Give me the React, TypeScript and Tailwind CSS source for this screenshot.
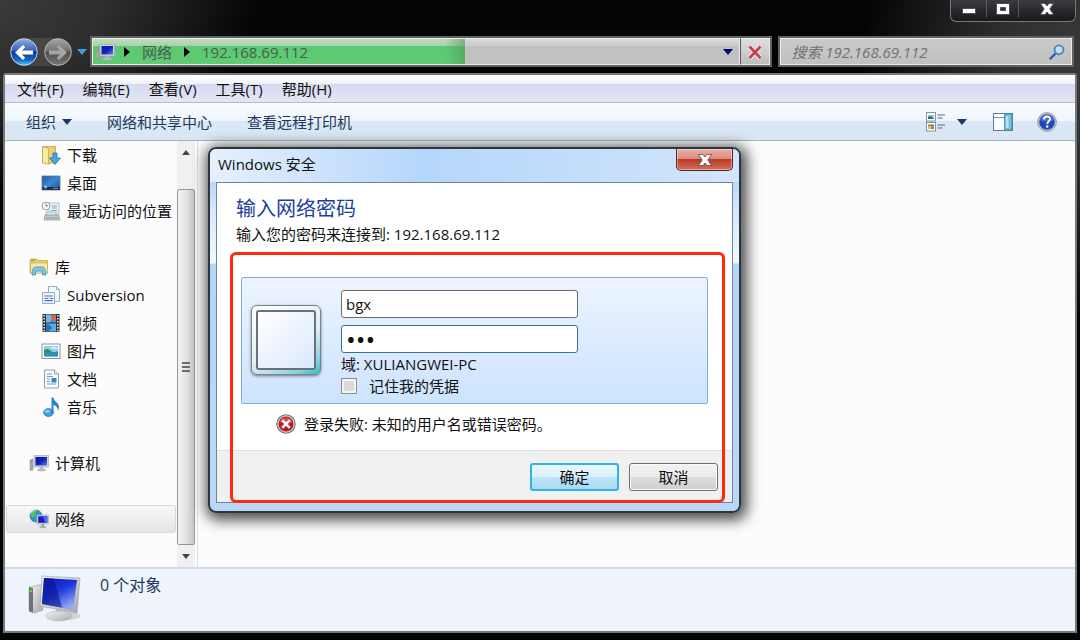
import { useState } from 'react';
import type { ReactNode } from 'react';

type NavItem = {
  label: string;
  icon: ReactNode;
  level?: number;
  active?: boolean;
};

function Caret({ className, fill = '#1e3a5f' }: { className?: string; fill?: string }) {
  return (
    <svg viewBox="0 0 10 6" className={className ?? 'h-[6px] w-[10px]'} aria-hidden="true">
      <path d="M0 0h10L5 6z" fill={fill} />
    </svg>
  );
}

function Crumb() {
  return (
    <svg viewBox="0 0 6 10" className="h-[10px] w-[6px] shrink-0" aria-hidden="true">
      <path d="M0 0l6 5-6 5z" fill="#000" />
    </svg>
  );
}

function BackIcon() {
  return (
    <svg viewBox="0 0 28 28" className="size-7" aria-hidden="true">
      <defs>
        <linearGradient id="back" x1="0" y1="0" x2="0" y2="1">
          <stop offset="0" stopColor="#8fb0e4" />
          <stop offset="0.45" stopColor="#2f62b8" />
          <stop offset="0.5" stopColor="#0c3a96" />
          <stop offset="0.8" stopColor="#1668c8" />
          <stop offset="1" stopColor="#4fd0ff" />
        </linearGradient>
      </defs>
      <circle cx="14" cy="14" r="13.3" fill="url(#back)" stroke="#c3cfe2" strokeWidth="1" />
      <path d="M5 14.500l8-7.500 2.200 2.200-3.300 3.300H23v4H11.900l3.300 3.300L13 22z" fill="#fff" />
    </svg>
  );
}

function ForwardIcon() {
  return (
    <svg viewBox="0 0 28 28" className="size-7" aria-hidden="true">
      <defs>
        <linearGradient id="forward" x1="0" y1="0" x2="0" y2="1">
          <stop offset="0" stopColor="#a4a4a4" />
          <stop offset="0.45" stopColor="#747474" />
          <stop offset="0.5" stopColor="#4e4e4e" />
          <stop offset="1" stopColor="#777" />
        </linearGradient>
      </defs>
      <circle cx="14" cy="14" r="13.3" fill="url(#forward)" stroke="#b4b4b4" strokeWidth="1" />
      <path d="M23 14.500L15 7l-2.200 2.200 3.300 3.300H5v4h11.100l-3.300 3.300L15 22z" fill="#a6a6a6" />
    </svg>
  );
}

function ComputerIcon() {
  return (
    <svg viewBox="0 0 20 20" className="size-5 shrink-0" aria-hidden="true">
      <defs>
        <linearGradient id="screen" x1="0" y1="0" x2="1" y2="1">
          <stop offset="0" stopColor="#0a14c8" />
          <stop offset="0.5" stopColor="#1420b4" />
          <stop offset="1" stopColor="#5c7cf0" />
        </linearGradient>
      </defs>
      <path d="M1 7l3-1v11l-3 .5z" fill="#a8a8a8" stroke="#888" strokeWidth="0.5" />
      <rect x="1.500" y="8" width="1.500" height="2" fill="#4fce3c" />
      <path d="M5 2.500h14.500v11.500H5z" fill="#d4d4d6" stroke="#a3a3a8" strokeWidth="0.6" />
      <path d="M6.500 4h11.500v8.500H6.500z" fill="url(#screen)" />
      <path d="M10.500 14h4v2.200h-4z" fill="#b5b5b5" />
      <ellipse cx="12.500" cy="17" rx="4.500" ry="1.300" fill="#b9b9bb" />
    </svg>
  );
}

function DownloadsIcon() {
  return (
    <svg viewBox="0 0 20 20" className="size-5" aria-hidden="true">
      <path d="M1.500 1.500h13v16l-7 1-6-1z" fill="#edcf74" stroke="#c29d45" strokeWidth="0.8" />
      <path d="M1.500 1.500l6 2v16l-6-2z" fill="#f9e9aa" stroke="#c29d45" strokeWidth="0.7" />
      <path d="M12 8h4v5h3.500L14 19.500 8.500 13H12z" fill="#48a6e6" stroke="#2272ae" strokeWidth="0.8" />
    </svg>
  );
}

function DesktopIcon() {
  return (
    <svg viewBox="0 0 20 20" className="size-5" aria-hidden="true">
      <defs>
        <linearGradient id="desk" x1="0" y1="0" x2="1" y2="1">
          <stop offset="0" stopColor="#1c5fae" />
          <stop offset="0.5" stopColor="#3d86d6" />
          <stop offset="1" stopColor="#1b4e98" />
        </linearGradient>
      </defs>
      <rect x="1" y="3" width="18" height="14" fill="url(#desk)" stroke="#64748b" strokeWidth="0.8" />
      <rect x="1.400" y="14" width="17.200" height="2.700" fill="#1a2940" />
      <circle cx="4.500" cy="14" r="1.800" fill="#4fb2e8" />
      <path d="M3.500 13h2v1h-2z" fill="#efc448" />
      <path d="M12 15.300h5" stroke="#9fb6d4" strokeWidth="0.8" />
    </svg>
  );
}

function RecentIcon() {
  return (
    <svg viewBox="0 0 20 20" className="size-5" aria-hidden="true">
      <path d="M7 2h11v11H7z" fill="#eef3f7" stroke="#a1adb8" strokeWidth="0.8" />
      <path d="M11 5h5M11 7h5M10 9.500h6" stroke="#6faed6" strokeWidth="1" />
      <path d="M5 11h10v4H5z" fill="#d5ecf5" stroke="#84a9bb" strokeWidth="0.7" />
      <path d="M4 14l-1 5h16l-1.500-5z" fill="#c6c8ca" stroke="#8d9093" strokeWidth="0.7" />
      <path d="M5 17h12" stroke="#86898c" strokeWidth="0.8" />
      <circle cx="5" cy="5" r="4" fill="#f3f5f7" stroke="#99a2aa" strokeWidth="1" />
      <path d="M5 2.500V5h2" stroke="#5d6a75" strokeWidth="0.8" fill="none" />
    </svg>
  );
}

function LibraryIcon() {
  return (
    <svg viewBox="0 0 20 20" className="size-5" aria-hidden="true">
      <path d="M1 3.500l1-1.500h6l1 1.500h9.500V16H1z" fill="#e9cd6c" stroke="#bf9d44" strokeWidth="0.7" />
      <path d="M2 2.500h4v1.500H2z" fill="#6ebf43" />
      <path d="M1.500 6h17v10h-17z" fill="#f8e8a6" stroke="#cbaa53" strokeWidth="0.6" />
      <path d="M3 18c0-5 1-8 4-8h6c3 0 4 3 4 8h-3.500v-4h-7v4z" fill="#7cc6ec" stroke="#4390bd" strokeWidth="0.8" />
    </svg>
  );
}

function SubversionIcon() {
  return (
    <svg viewBox="0 0 20 20" className="size-5" aria-hidden="true">
      <path d="M7.500 1.500h8l3 3v12h-11z" fill="#f4f9fd" stroke="#8ba6c1" strokeWidth="0.9" />
      <path d="M15.500 1.500v3h3" fill="#d6e5f2" stroke="#8ba6c1" strokeWidth="0.8" />
      <path d="M1.500 7.500h12v11h-12z" fill="#e9f3fb" stroke="#8ba6c1" strokeWidth="0.9" />
      <path d="M3.500 11h8M3.500 13.500h4M9 13.500h3M3.500 15.700h8" stroke="#5379b5" strokeWidth="1.2" />
    </svg>
  );
}

function VideoIcon() {
  return (
    <svg viewBox="0 0 20 20" className="size-5" aria-hidden="true">
      <rect x="1.500" y="1" width="17" height="18" fill="#2b3134" />
      <rect x="5" y="1.500" width="10" height="8" fill="#3f92d6" />
      <rect x="5" y="10.500" width="10" height="8" fill="#56aee9" />
      <path d="M5 1.500h4l2 3-2 5H5z" fill="#bfd9ea" opacity="0.5" />
      <path d="M10 3l5-1v7l-4-2z" fill="#d46a45" />
      <path d="M5 11l4 1 2 3-3 3H5z" fill="#2d6eb4" />
      <path d="M3.200 2v17M16.800 2v17" stroke="#dfe4e6" strokeWidth="1.6" strokeDasharray="1.5 1.5" />
    </svg>
  );
}

function PictureIcon() {
  return (
    <svg viewBox="0 0 20 20" className="size-5" aria-hidden="true">
      <rect x="1" y="3" width="18" height="14.500" fill="#fff" stroke="#8b9299" strokeWidth="1" />
      <rect x="3" y="5" width="14" height="10.500" fill="#8fd0ee" />
      <path d="M3 9c3-2 5-1 7 1s5 1 7 0v3H3z" fill="#3a8b63" />
      <path d="M3 12c5-1 9 0 14-1v4.500H3z" fill="#2f8fbf" />
      <path d="M9 7c3-1 5-1 7 0v1z" fill="#fff" />
    </svg>
  );
}

function DocumentIcon() {
  return (
    <svg viewBox="0 0 20 20" className="size-5" aria-hidden="true">
      <path d="M3.500 1h10l4 4v14h-14z" fill="#fafcfe" stroke="#8c949b" strokeWidth="0.9" />
      <path d="M13.500 1v4h4" fill="#dfe6ec" stroke="#8c949b" strokeWidth="0.8" />
      <path d="M6 5h5M6 7.500h6M6 10h3M6 12.500h3M6 15h9" stroke="#6d97c0" strokeWidth="1" />
      <rect x="10.500" y="9" width="5" height="4.500" fill="#3484c4" />
    </svg>
  );
}

function MusicIcon() {
  return (
    <svg viewBox="0 0 20 20" className="size-5" aria-hidden="true">
      <ellipse cx="7.500" cy="15.500" rx="5" ry="4" fill="#3b9fe0" stroke="#1f6fa8" strokeWidth="0.6" />
      <path d="M10.500 0.500h2c0 4 5.500 5 5.500 9.500 0 1.500-.6 3-1.300 3.800.4-3.300-1.700-5-4.200-5.800v8h-2z" fill="#2a86c9" />
      <ellipse cx="6.500" cy="14.500" rx="2.400" ry="1.400" fill="#90d2f6" />
    </svg>
  );
}

function NetworkIcon() {
  return (
    <svg viewBox="0 0 20 20" className="size-5" aria-hidden="true">
      <circle cx="7" cy="7" r="6" fill="#2b93d6" stroke="#2b6a98" strokeWidth="0.6" />
      <path d="M3 3c2-2 4-2 5-1.500L6 4l1 2-3 2.500-2.500-2zM7 8l3 1-1 3.500-2-.5z" fill="#5fc356" />
      <path d="M2 4c1-2 3-3 5-3" stroke="#d6f0ff" strokeWidth="0.8" fill="none" />
      <rect x="8" y="6" width="11.500" height="9" fill="#d2d3d6" stroke="#9d9ea3" strokeWidth="0.5" />
      <rect x="9.200" y="7.200" width="9.100" height="6.600" fill="#1522be" />
      <path d="M14 7.200h4.300v6.600H16z" fill="#4d6ae4" />
      <path d="M12.500 15h2.500v2h-2.500z" fill="#999" />
      <ellipse cx="13.700" cy="18" rx="3.500" ry="1.200" fill="#b0b1b4" />
    </svg>
  );
}

function BigComputerIcon() {
  return (
    <svg viewBox="0 0 54 50" className="h-[50px] w-[54px]" aria-hidden="true">
      <defs>
        <linearGradient id="bigScreen" x1="0" y1="0" x2="0.6" y2="1">
          <stop offset="0" stopColor="#0a18c0" />
          <stop offset="0.5" stopColor="#1a35d8" />
          <stop offset="1" stopColor="#8fa8f6" />
        </linearGradient>
        <linearGradient id="metal" x1="0" y1="0" x2="1" y2="1">
          <stop offset="0" stopColor="#f5f5f5" />
          <stop offset="1" stopColor="#a6a8ab" />
        </linearGradient>
      </defs>
      <ellipse cx="38" cy="42" rx="15" ry="4" fill="#000" opacity="0.12" />
      <path d="M1 13l14-3v26L7 39l-6-2z" fill="url(#metal)" stroke="#a5a5a8" strokeWidth="0.6" />
      <path d="M1 13l4 1v25l-4-2z" fill="#6f7275" />
      <circle cx="3" cy="17" r="1.4" fill="#5be03d" />
      <path d="M14 2l38 2-3 35-37-7z" fill="url(#metal)" stroke="#9d9fa2" strokeWidth="0.6" />
      <path d="M16 4l33 2-4 30-31-6z" fill="url(#bigScreen)" />
      <path d="M16 4l10 .6 8 29L14 30z" fill="#0a1590" opacity="0.6" />
      <path d="M28 35l9 2-1 6h-8z" fill="#b5b7b9" />
      <ellipse cx="31" cy="42" rx="13" ry="5" fill="url(#metal)" stroke="#b4b4b6" strokeWidth="0.6" />
    </svg>
  );
}

function ViewIcon() {
  return (
    <svg viewBox="0 0 20 20" className="size-5" aria-hidden="true">
      <rect x="0.500" y="0.500" width="9" height="8.500" fill="#fff" stroke="#7a8794" strokeWidth="0.9" />
      <path d="M2 3h6v4H2z" fill="#8ecbe8" />
      <path d="M2 5l3-1 3 3H2z" fill="#2d7a5a" />
      <rect x="0.500" y="10.500" width="9" height="8.500" fill="#fff" stroke="#7a8794" strokeWidth="0.9" />
      <path d="M2 12.500h3v2H2z" fill="#e0652f" />
      <path d="M5 12.500h3v2H5z" fill="#3b7fd0" />
      <path d="M2 14.500h3v2.500H2z" fill="#efc02f" />
      <path d="M5 14.500h3v2.500H5z" fill="#58a83c" />
      <path d="M11.500 3h7.500M11.500 6h5M11.500 13h7.500M11.500 16h5" stroke="#5b6a7c" strokeWidth="1.2" />
    </svg>
  );
}

function PreviewIcon() {
  return (
    <svg viewBox="0 0 20 18" className="h-[18px] w-5" aria-hidden="true">
      <rect x="0.500" y="0.500" width="19" height="17" fill="#fdfeff" stroke="#5f7d95" />
      <path d="M1 4.500h10.500" stroke="#7b93a8" />
      <rect x="11.500" y="1" width="7.500" height="16" fill="#6fc0dc" stroke="#4a7f9b" strokeWidth="0.8" />
      <path d="M13 3h2.500v12H13z" fill="#b5e6f5" />
    </svg>
  );
}

function HelpIcon() {
  return (
    <svg viewBox="0 0 20 20" className="size-5" aria-hidden="true">
      <circle cx="10" cy="10" r="9.3" fill="#c9ced6" stroke="#8d939d" strokeWidth="1" />
      <circle cx="10" cy="10" r="7.8" fill="#2149b4" />
      <path d="M3 8a7.500 7.500 0 0 1 14 0c-4 2-10 2-14 0z" fill="#6587d8" opacity="0.6" />
      <path d="M7 7.500c0-4 6-4 6-.5 0 2.200-2.800 2.400-2.800 5" fill="none" stroke="#fff" strokeWidth="1.9" />
      <circle cx="10.200" cy="14.500" r="1.2" fill="#fff" />
    </svg>
  );
}

function ErrorIcon() {
  return (
    <svg viewBox="0 0 20 20" className="size-5 shrink-0" aria-hidden="true">
      <circle cx="10" cy="10" r="9.2" fill="#d0d0d2" stroke="#77797c" strokeWidth="1.1" />
      <circle cx="10" cy="10" r="7.5" fill="#c01820" />
      <path d="M3.500 8a7 7 0 0 1 13 0c-4 2-9 2-13 0z" fill="#e2686c" opacity="0.6" />
      <path d="M6.200 6.200l7.600 7.600M13.800 6.200l-7.600 7.600" stroke="#fff" strokeWidth="2.6" />
    </svg>
  );
}

function SearchIcon() {
  return (
    <svg viewBox="0 0 16 16" className="size-4 shrink-0" aria-hidden="true">
      <path d="M6.500 9.500L1.500 14.500" stroke="#2d5aa8" strokeWidth="2.4" strokeLinecap="round" />
      <circle cx="10" cy="5.800" r="4.4" fill="#c9dcea" stroke="#3c8dd0" strokeWidth="1.9" />
    </svg>
  );
}

function StopIcon() {
  return (
    <svg viewBox="0 0 16 16" className="size-4" aria-hidden="true">
      <path d="M2.500 2.500l11 11.500M13.500 2.500l-11 11.500" stroke="#f4eeee" strokeWidth="5" />
      <path d="M2.500 2.500l11 11.500M13.500 2.500l-11 11.500" stroke="#c4434c" strokeWidth="3" />
    </svg>
  );
}

function CloseGlyph() {
  return (
    <svg viewBox="0 0 14 12" className="h-3 w-[14px]" aria-hidden="true">
      <path d="M0.500 0.500h4.500l2 2.500 2-2.500h4.500L9.800 6l3.700 5.500H9L7 9l-2 2.500H0.500L4.200 6z" fill="#fff" stroke="#4b4f58" strokeWidth="0.8" />
    </svg>
  );
}

const navItems: (NavItem | null)[] = [
  { label: '下载', icon: <DownloadsIcon />, level: 1 },
  { label: '桌面', icon: <DesktopIcon />, level: 1 },
  { label: '最近访问的位置', icon: <RecentIcon />, level: 1 },
  null,
  { label: '库', icon: <LibraryIcon /> },
  { label: 'Subversion', icon: <SubversionIcon />, level: 1 },
  { label: '视频', icon: <VideoIcon />, level: 1 },
  { label: '图片', icon: <PictureIcon />, level: 1 },
  { label: '文档', icon: <DocumentIcon />, level: 1 },
  { label: '音乐', icon: <MusicIcon />, level: 1 },
  null,
  { label: '计算机', icon: <ComputerIcon /> },
  null,
  { label: '网络', icon: <NetworkIcon />, active: true },
];

const menus = ['文件(F)', '编辑(E)', '查看(V)', '工具(T)', '帮助(H)'];

function WindowControls() {
  return (
    <div className="flex h-9 items-start justify-end pr-1">
      <div className="flex h-[22px] divide-x divide-[#5a5b5e] rounded-b-md border border-t-0 border-[#77787b] bg-gradient-to-b from-[#3b3c3f] to-[#18191b] pb-1">
        <button aria-label="最小化" className="flex w-9 items-center justify-center">
          <svg viewBox="0 0 14 6" className="mt-1 h-[6px] w-[14px]" aria-hidden="true">
            <rect x="0.500" y="0.500" width="13" height="5" fill="#fff" stroke="#4b4f58" />
          </svg>
        </button>
        <button aria-label="最大化" className="flex w-8 items-center justify-center">
          <svg viewBox="0 0 14 12" className="h-3 w-[14px]" aria-hidden="true">
            <path d="M0.500 0.500h13v11H0.500zM4.500 4.500v3h5v-3z" fill="#fff" fillRule="evenodd" stroke="#4b4f58" />
          </svg>
        </button>
        <button aria-label="关闭" className="flex w-14 items-center justify-center">
          <CloseGlyph />
        </button>
      </div>
    </div>
  );
}

function AddressRow({ progress }: { progress: number }) {
  return (
    <div className="mb-[6px] flex h-[31px] items-stretch pr-[6px] pl-[10px]">
      <div className="flex w-20 shrink-0 items-center">
        <div className="flex gap-[6px] rounded-full bg-white/10">
          <button aria-label="后退"><BackIcon /></button>
          <button aria-label="前进"><ForwardIcon /></button>
        </div>
        <button aria-label="最近的页面" className="ml-[5px]">
          <Caret fill="#3d9be0" />
        </button>
      </div>

      <div className="flex min-w-0 flex-[684] border-2 border-[#606163] bg-[#c3c3c3]">
        <div className="relative flex min-w-0 flex-1 items-center border border-[#ececec] bg-[linear-gradient(#dadada_0,#cbcbcb_7px,#c1c1c1_7px,#c1c1c1)]">
          <div
            role="progressbar"
            aria-label="加载进度"
            aria-valuenow={progress}
            className="absolute inset-y-0 left-0 bg-[linear-gradient(#c0dcc0_0,#a8d0a8_7px,#5dc872_7px,#60ca75)]"
            style={{ width: `${progress}%` }}
          >
            <div className="ml-auto h-full w-5 bg-gradient-to-r from-transparent to-[#4f9a5c]/60" />
          </div>
          <nav aria-label="地址" className="relative flex min-w-0 flex-1 items-center pl-[2px] text-[#46604c]">
            <ComputerIcon />
            <span className="ml-[9px] flex items-center gap-3">
              <Crumb />
              <a href="#network">网络</a>
              <Crumb />
              <a href="#host">192.168.69.112</a>
            </span>
          </nav>
          <button aria-label="以前的位置" className="relative px-[6px]">
            <Caret fill="#00007a" />
          </button>
        </div>
        <button aria-label="停止" className="flex w-[30px] shrink-0 items-center justify-center border border-l-[#555] border-[#ececec] bg-gradient-to-b from-[#dedede] to-[#bdbdbd]">
          <StopIcon />
        </button>
      </div>

      <div className="ml-[6px] flex min-w-0 flex-[294] items-center border-2 border-[#606163] bg-[#c3c3c3]">
        <label className="flex h-full min-w-0 flex-1 items-center border border-[#ececec] bg-gradient-to-b from-[#c9c9c9] to-[#bfc1bf] pr-[6px] pl-[10px]">
          <input
            aria-label="搜索"
            placeholder="搜索 192.168.69.112"
            className="min-w-0 flex-1 bg-transparent italic outline-none placeholder:text-[#727272]"
          />
          <SearchIcon />
        </label>
      </div>
    </div>
  );
}

function Sidebar() {
  return (
    <aside className="flex w-[193px] shrink-0 border-r border-[#d3e0f0] bg-[#fcfcfc] pr-[2px]">
      <ul className="min-w-0 flex-1 px-px">
        {navItems.map((item, i) => (
          <li key={i} className="h-7">
            {item && (
              <a
                href="#"
                className={
                  'flex h-7 items-center gap-[6px] whitespace-nowrap rounded-[3px] border ' +
                  (item.level ? 'pl-[34px] ' : 'pl-[22px] ') +
                  (item.active ? 'border-[#d9d9d9] bg-gradient-to-b from-[#f8f8f8] to-[#e5e5e5]' : 'border-transparent')
                }
              >
                {item.icon}
                {item.label}
              </a>
            )}
          </li>
        ))}
      </ul>
      <div className="flex w-[18px] shrink-0 flex-col bg-[#f0f0f0]">
        <button aria-label="向上滚动" className="flex h-12 justify-center pt-[9px]">
          <Caret className="h-[5px] w-2 rotate-180" fill="#444" />
        </button>
        <div className="flex flex-1 flex-col items-center justify-center gap-[2px] rounded-[2px] border border-[#979797] bg-gradient-to-r from-[#f4f4f4] via-[#e4e4e6] to-[#c6c6ca]">
          <i className="h-[2px] w-2 bg-[#6d6d6d]" />
          <i className="h-[2px] w-2 bg-[#6d6d6d]" />
          <i className="h-[2px] w-2 bg-[#6d6d6d]" />
        </div>
        <button aria-label="向下滚动" className="flex h-[22px] items-center justify-center">
          <Caret className="h-[5px] w-2" fill="#444" />
        </button>
      </div>
    </aside>
  );
}

function LoginDialog() {
  const [user, setUser] = useState('bgx');
  const [password, setPassword] = useState('123');
  const [remember, setRemember] = useState(false);

  const inputClass = 'h-7 w-[237px] rounded-[3px] border bg-white px-1 outline-none';

  return (
    <section
      role="dialog"
      aria-labelledby="dialog-title"
      className="absolute top-[147px] left-[208px] w-[533px] rounded-lg border-2 border-[#2b3540] bg-[linear-gradient(#cfe3fa_0,#bcd9fa_34px,#d5e7fb_60px,#f2f8fe_114px,#b5d5f9_115px,#b9d7f8)] px-[6px] pb-[8px] shadow-[2px_3px_14px_4px_rgba(0,0,0,0.7)]"
    >
      <div className="-mx-[6px] flex h-[33px] items-start justify-between rounded-t-md bg-gradient-to-r from-[#e6f0fc] via-[#b5d6fb] via-40% to-[#d2e5fb] pr-[6px] pl-2">
        <h2 id="dialog-title" className="leading-[30px]">Windows 安全</h2>
        <button
          aria-label="关闭"
          className="flex h-[22px] w-[57px] items-center justify-center rounded-b-[5px] border border-t-0 border-[#5c2320] bg-[linear-gradient(#eab0a5_0,#d9897b_50%,#bb3a26_50%,#d4705c)] shadow-[inset_0_0_0_1px_rgba(255,255,255,0.4)]"
        >
          <CloseGlyph />
        </button>
      </div>

      <form className="border border-[#70859c] bg-white" onSubmit={(e) => e.preventDefault()}>
        <div className="px-[19px] pt-3">
          <h1 className="text-[20px] leading-7 text-[#1b3f9c]">输入网络密码</h1>
          <p className="leading-[22px]">输入您的密码来连接到: 192.168.69.112</p>
        </div>

        <div className="mx-6 mt-8 flex rounded-[2px] border border-[#84acdd] bg-gradient-to-b from-[#edf4fe] to-[#cde3ff] pt-3 pb-[6px] pl-[9px]">
          <div className="mt-[15px] mr-5 size-[70px] shrink-0 rounded-[6px] border border-[#6f858f] bg-[linear-gradient(150deg,#fff_0%,#e4edf2_55%,#8fd2dd_85%,#35b8ca)] p-1 shadow-[0_1px_3px_rgba(0,0,0,0.5)]">
            <div className="h-full rounded-[3px] border-2 border-[#66727c] bg-gradient-to-br from-white to-[#dbe8fd]" />
          </div>
          <div className="flex flex-col">
            <input
              aria-label="用户名"
              value={user}
              onChange={(e) => setUser(e.target.value)}
              className={inputClass + ' border-[#6b6b6b]'}
            />
            <input
              aria-label="密码"
              type="password"
              value={password}
              onChange={(e) => setPassword(e.target.value)}
              className={inputClass + ' mt-[7px] border-[#3b6e98] text-[26px]'}
            />
            <p className="leading-[22px]">域: XULIANGWEI-PC</p>
            <label className="flex items-center gap-3 leading-[22px]">
              <input
                type="checkbox"
                checked={remember}
                onChange={(e) => setRemember(e.target.checked)}
                className="size-4 appearance-none border border-[#8e8f8f] bg-[#d9dadb] shadow-[inset_0_0_0_2px_#f4f4f4] checked:bg-[#2f62b8]"
              />
              记住我的凭据
            </label>
          </div>
        </div>

        <p role="alert" className="flex h-[46px] items-center gap-2 pb-[6px] pl-[59px]">
          <ErrorIcon />
          登录失败: 未知的用户名或错误密码。
        </p>

        <div className="flex h-[52px] items-center justify-end gap-[10px] border-t border-[#dfdfdf] bg-[#f0f0f0] pr-[14px]">
          <button
            type="submit"
            className="h-7 w-[89px] rounded-[3px] border-2 border-[#2fb4e4] bg-[linear-gradient(#eaf6fd_0,#dcf0fb_50%,#bee4f8_50%,#a9dbf5)]"
          >
            确定
          </button>
          <button
            type="button"
            className="h-7 w-[89px] rounded-[3px] border border-[#707070] bg-[linear-gradient(#f2f2f2_0,#ebebeb_50%,#dddddd_50%,#cfcfcf)] shadow-[inset_0_0_0_1px_#fafafa]"
          >
            取消
          </button>
        </div>
      </form>

      {/* red marker around the credentials */}
      <div className="pointer-events-none absolute top-[103px] right-[14px] bottom-[8px] left-[20px] rounded-md border-[3px] border-[#ff2a0c]" />
    </section>
  );
}

export default function App() {
  return (
    <div className="relative flex min-h-screen flex-col bg-[#030406] bg-[radial-gradient(ellipse_260px_190px_at_0%_0%,#3a3a3b_0%,#2e2e2f_40%,transparent_100%),radial-gradient(ellipse_220px_260px_at_100%_10%,#39393a_0%,#303031_35%,transparent_100%)] pb-[7px] font-['Open_Sans','Noto_Sans_CJK_SC',sans-serif] text-[15px] leading-[22px] text-[#111]">
      <WindowControls />
      <AddressRow progress={57.5} />

      <div className="mr-[3px] ml-[3px] flex flex-1 flex-col rounded-t-[3px] border-2 border-[#77787a] bg-[#fcfcfc]">
        <ul className="flex h-7 items-center gap-[19px] border-b border-[#b3b8d0] bg-[linear-gradient(#fff_0,#f0f2fa_9px,#d6daee_9px,#e2e6f6)] pl-3">
          {menus.map((menu) => (
            <li key={menu}>
              <button>{menu}</button>
            </li>
          ))}
        </ul>

        <div className="flex h-[38px] items-center justify-between border-b border-[#a3b4ca] bg-[linear-gradient(#fbfdff_0,#edf5fd_18px,#dce7f5_18px,#dbe6f4)] pr-[18px] pl-[21px] text-[#1e395b]">
          <div className="flex items-center gap-[35px]">
            <button className="flex items-center gap-[6px]">
              组织 <Caret />
            </button>
            <button>网络和共享中心</button>
            <button>查看远程打印机</button>
          </div>
          <div className="flex items-center">
            <button aria-label="更改视图"><ViewIcon /></button>
            <button aria-label="更多选项" className="ml-[11px]"><Caret className="h-[6px] w-[10px]" /></button>
            <button aria-label="预览窗格" className="ml-[26px]"><PreviewIcon /></button>
            <button aria-label="帮助" className="ml-6"><HelpIcon /></button>
          </div>
        </div>

        <div className="flex flex-1">
          <Sidebar />
          <main className="flex-1" />
        </div>

        <footer className="flex h-[64px] items-start border-t-2 border-[#cfdcee] bg-[#eff3fb] pt-[5px] pl-[23px] text-[#1e395b]">
          <BigComputerIcon />
          <p className="ml-[18px] text-base leading-[22px]">0 个对象</p>
        </footer>
      </div>

      <LoginDialog />
    </div>
  );
}
